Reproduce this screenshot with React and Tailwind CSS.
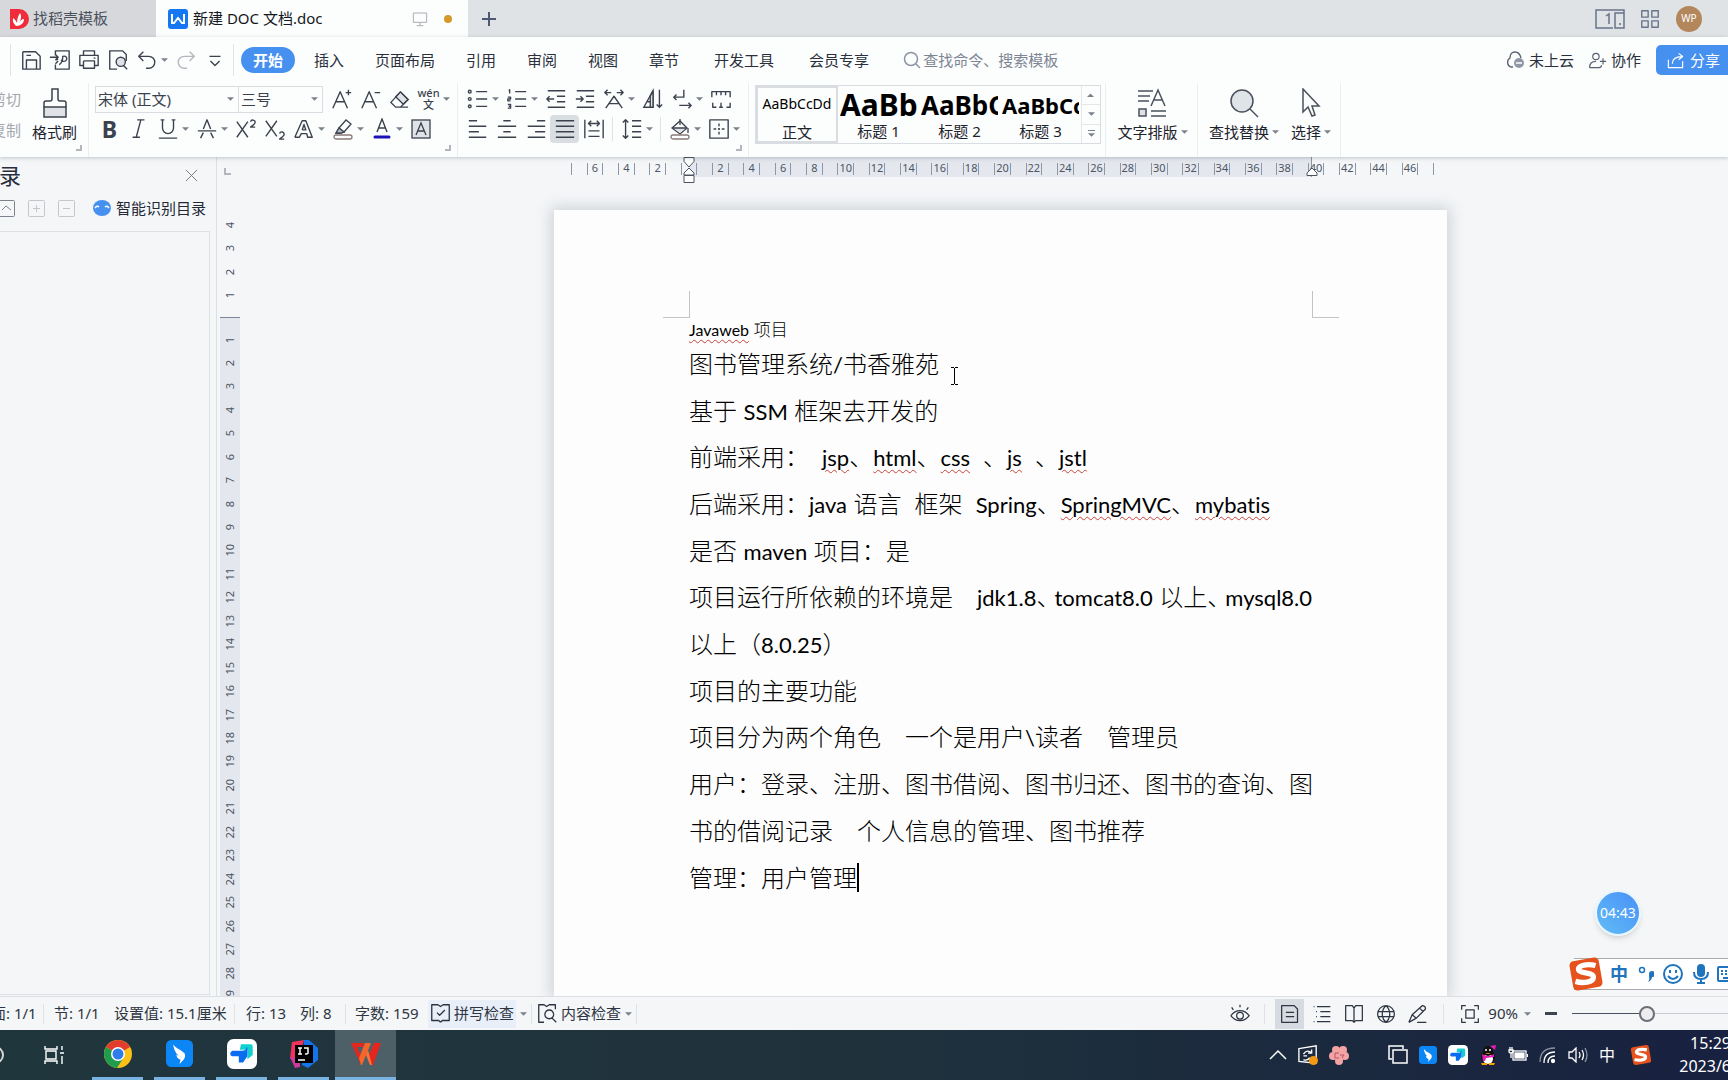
import { useState } from "react";
import clsx from "clsx";

// stroke drawings on a 24px grid
const PATHS = {
    save: "M3 3h14l5 5v14h-4M3 3v19h4M7 22v-10h11v10zM7 7h5",
    exportPdf: "M7 7V2h15v20H7v-5M1 9h9M7 6l3 3-3 3M7 12l3-1M11 17c3-1 4-4 4-9 4-1 5 2 4 4-1 2-4 2-6 0M7 16l3-3",
    print: "M6 7V2h12v5M6 18H2V7h20v11h-4M6 13h12v8H6v-8M17 10h2",
    preview: "M11 22H3V2h14l4 4v7",
    undo: "M8 3L3 8l5 5M3 8h11a6 6 0 0 1 0 13h-3",
    redo: "M16 3l5 5-5 5M21 8H10a6 6 0 0 0 0 13h3",
    more: "M6 8h12M7 13l5 5 5-5",
    italic: "M10 2h8M5 21h8M14 2l-5 19",
    underline: "M6 2v9a6 6 0 0 0 12 0V2M2 22h20M4 2h4M16 2h4",
    strike: "M2 14h20M8 12l4-10 4 10M5 22l3-6M19 22l-3-6",
    sup: "M2 4l12 17M14 4L2 21M17 4c1-3 5-2 5 1 0 1-1 2-5 5h5",
    sub: "M2 3l12 17M14 3L2 20M17 17c1-3 5-2 5 1 0 1-1 2-5 5h5",
    outlineA: "M2 21L10 3h4l7 18h-5l-1-4H9l-2 4H2M10 13l2-6 2 6h-4",
    growA: "M2 22L10 4l8 18M5 15h10M19 2v6M16 5h6",
    shrinkA: "M2 22L10 4l8 18M5 15h10M16 5h6",
    bullets: "M10 4h12M10 12h12M10 20h12",
    numbers: "M10 4h12M10 12h12M10 20h12M3 3l1-1v4M2 10h3v2H2v2h3M2 18h3v4H2M3 20h2",
    outdent: "M3 3h19M13 9h9M13 15h9M3 21h19M2 12h8M5 9l-3 3 3 3",
    indent: "M3 3h19M13 9h9M13 15h9M3 21h19M2 12h8M7 9l3 3-3 3",
    charScale: "M2 5h7M5 2L2 5l3 3M15 5h7M19 2l3 3-3 3M3 22l9-13 9 13M7 17h10",
    wrap: "M14 2v8H3M6 7l-3 3 3 3M9 19h13M19 16l3 3-3 3",
    tabs: "M2 10V4h20v6M7 4v4M12 4v4M17 4v4M3 16v5h4M10 21h4M12 16v5M18 21h4v-5",
    left: "M2 3h9M2 9h19M2 15h11M2 21h19",
    center: "M8 3h8M2 9h20M8 15h8M2 21h20",
    right: "M13 3h9M3 9h19M11 15h11M3 21h19",
    justify: "M2 3h20M2 9h20M2 15h20M2 21h20",
    distribute: "M2 2v20M22 2v20M6 6h12M9 3L6 6l3 3M15 3l3 3-3 3M6 14h12M6 20h12",
    lineSpace: "M5 2v20M2 5l3-3 3 3M2 19l3 3 3-3M12 3h10M12 9h10M12 15h10M12 21h10",
    borders: "M2 2h20v20H2zM12 6v3M12 15v3M6 12h3M15 12h3M11 12h2M12 11v2",
    eye: "M1 14c6-8 16-8 22 0c-6 8-16 8-22 0M16 14a4 4 0 1 1-8 0a4 4 0 1 1 8 0M12 1v3M2 4l2 3M22 4l-2 3",
    pageView: "M2 2h15l4 4v16H2zM7 10h10M7 15h10",
    outline: "M6 3h16M10 9h12M10 15h12M6 21h16M2 3h1M5 9h1M5 15h1M2 21h1",
    book: "M12 5V21M12 5l-2-3H2v18h8l2 2 2-2h8V2h-8l-2 3",
    globe: "M22 12a10 10 0 1 1-20 0a10 10 0 1 1 20 0M2 9h20M2 15h20M12 2c-6 5-6 15 0 20M12 2c6 5 6 15 0 20",
    pen: "M1 22l4-9L17 2q4 0 4 4L10 17l-9 5M14 5l4 4M11 22h11M5 13l5 4",
    fit: "M2 7V2h5M17 2h5v5M22 17v5h-5M7 22H2v-5M7 7h10v10H7z",
    check: "M12 22l-2-2H2V2h7l3 2 3-2h7v18h-8l-2 2M8 11l3 3 6-6",
    contentCheck: "M8 22H2V2h6l3 2 3-2h7v5M19 13a5 5 0 1 1-10 0a5 5 0 1 1 10 0M17 17l5 5",
    person: "M14 7a4 4 0 1 1-8 0a4 4 0 1 1 8 0M2 21c0-6 3-8 8-8M2 21h12c2 0 3-1 3-3M19 9v8M15 13h8",
    share: "M3 11v10h18v-8M8 16c0-6 3-9 12-9M16 3l5 4-5 4",
    grid: "M3 3h7v7H3zM14 3h7v7h-7zM3 14h7v7H3zM14 14h7v7h-7z",
    monitor: "M2 3h20v14H2zM12 17v5M7 22h10",
};

function Icon({ name, className, width = 1.5 }) {
    return (
        <svg viewBox="0 0 24 24" className={className} fill="none" stroke="currentColor" strokeWidth={width} strokeLinejoin="round">
            <path d={PATHS[name]} />
        </svg>
    );
}

function Caret() {
    return (
        <svg viewBox="0 0 8 4" className="h-1 w-[7px] shrink-0 text-[#7b818c]">
            <path d="M0 0h8L4 4z" fill="currentColor" />
        </svg>
    );
}

function Tool({ name, label, caret, active, children }) {
    return (
        <button aria-label={label} className="flex h-7 shrink-0 items-center">
            <span className={clsx("flex h-7 w-[29px] items-center justify-center rounded-sm", active && "bg-[#d9dee3]")}>
                {children || <Icon name={name} className="size-[22px]" />}
            </span>
            {caret && <span className="flex w-[10px] items-center"><Caret /></span>}
        </button>
    );
}

function Divider({ className = "h-5" }) {
    return <span className={clsx("w-px shrink-0 bg-[#dfe2e6]", className)} />;
}

function GroupCorner() {
    return <span className="absolute right-[6px] bottom-[6px] size-[6px] border-r-2 border-b-2 border-[#b3b7bd]" />;
}

function BirdIcon({ className }) {
    return (
        <svg viewBox="0 0 26 26" className={className}>
            <rect width="26" height="26" rx="5" fill="#0d86f5" />
            <path d="M7 4c2 4 9 6 11 9 1 3 0 5-2 7l-3 3 1-4c-3-1-4-3-4-5 1 1 2 1 2 1C9 12 7 8 7 4z" fill="#fff" />
        </svg>
    );
}

function TimIcon({ className }) {
    return (
        <svg viewBox="0 0 28 28" className={className}>
            <rect width="28" height="28" rx="6" fill="#fff" />
            <path d="M13 5h9q2 0 2 2v8l-5 4V10h-7z" fill="#12cfd0" />
            <path d="M5 11h9q4 0 4-3h1v8l-4 6h-4v-6H5q-2 0-2-2t2-3z" fill="#0a6cf0" />
        </svg>
    );
}

function SogouIcon({ className }) {
    return (
        <svg viewBox="0 0 34 34" className={className}>
            <rect x="3" y="3" width="28" height="28" rx="4" fill="#e5521d" transform="rotate(-10 17 17)" />
            <path d="M26 9C18 7 9 9 10 13s14 2 14 7-10 6-17 4" fill="none" stroke="#fff" strokeWidth="5" />
        </svg>
    );
}

function TabBar() {
    return (
        <header className="flex h-[37px] shrink-0 items-center bg-[#dfe3e5]">
            <button className="flex h-full w-[156px] items-center gap-1 bg-[#d6d8dc] pl-[9px] text-[#4c525c]">
                <svg viewBox="0 0 20 20" className="size-5">
                    <path d="M1 0h9a10 10 0 0 1 0 20H1z" fill="#f02c3a" />
                    <path d="M7 17C3 13 4 11 4 9c2 1 3 3 4 5 0-4 1-7 3-10 2 3 1 7-1 10 1-2 3-4 5-4 0 4-3 7-8 7z" fill="#fff" />
                </svg>
                找稻壳模板
            </button>
            <div className="flex h-full w-[312px] items-center bg-[#fcfdfd] pr-4 pl-3">
                <svg viewBox="0 0 20 20" className="size-5">
                    <rect width="20" height="20" rx="3" fill="#1677f2" />
                    <path d="M4 5v9h2l4-5 4 5h2V5" fill="none" stroke="#fff" strokeWidth="2" />
                </svg>
                <h1 className="ml-[5px] flex-1 text-[#15181d]">新建 DOC 文档.doc</h1>
                <Icon name="monitor" className="size-4 text-[#a8adb5]" />
                <span className="ml-4 size-2 rounded-full bg-[#d39a27]" />
            </div>
            <button aria-label="新建标签" className="ml-[13px] text-[#4f5871]">
                <svg viewBox="0 0 16 16" className="size-4"><path d="M8 1v14M1 8h14" stroke="currentColor" strokeWidth="2" /></svg>
            </button>
            <div className="ml-auto flex items-center pr-[13px] text-[#69738a]">
                <svg viewBox="0 0 30 20" className="h-5 w-[30px]" fill="none" stroke="currentColor" strokeWidth="1.5">
                    <path d="M18 19H1V1h28v18h-9V4h9M24 15h2M11 7l3-2v10" />
                </svg>
                <Icon name="grid" className="ml-[14px] size-[22px]" />
                <span className="ml-[15px] flex size-[26px] items-center justify-center rounded-full bg-[#b3875b] text-[10px] text-white">WP</span>
                <Divider className="ml-3 h-[26px]" />
            </div>
        </header>
    );
}

const MENUS = ["插入", "页面布局", "引用", "审阅", "视图", "章节"];
const EXTRA_MENUS = ["开发工具", "会员专享"];

function MenuRow() {
    return (
        <nav className="flex h-[46px] shrink-0 items-center pl-[10px]">
            <Divider className="h-8" />
            <div className="flex items-center pl-[5px] text-[#3b424d]">
                <Tool name="save" label="保存" />
                <Tool name="exportPdf" label="输出为PDF" />
                <Tool name="print" label="打印" />
                <Tool label="打印预览">
                    <svg viewBox="0 0 24 24" className="size-[22px]" fill="none" stroke="currentColor" strokeWidth="1.500">
                        <path d={PATHS.preview} /><circle cx="15" cy="14" r="5" fill="#dfe2e6" /><path d="M18 18l4 4" />
                    </svg>
                </Tool>
                <Tool name="undo" label="撤销" caret />
                <span className="text-[#b4b8be]"><Tool name="redo" label="恢复" /></span>
                <Tool name="more" label="更多" />
            </div>
            <Divider className="ml-1 h-8" />
            <button className="ml-[7px] h-[26px] w-[54px] rounded-full bg-[#4690ef] font-bold text-white">开始</button>
            <div className="ml-[19px] flex gap-[31px]">
                {MENUS.map((m) => <button key={m}>{m}</button>)}
            </div>
            <div className="ml-[35px] flex gap-[35px]">
                {EXTRA_MENUS.map((m) => <button key={m}>{m}</button>)}
            </div>
            <label className="ml-[34px] flex items-center gap-[2px] text-[#8e95a3]">
                <svg viewBox="0 0 18 18" className="size-[18px]" fill="none" stroke="currentColor" strokeWidth="1.5">
                    <circle cx="8" cy="8" r="6.500" /><path d="M13 13l4 4" />
                </svg>
                <input aria-label="查找命令" placeholder="查找命令、搜索模板" className="w-[150px] bg-transparent outline-none placeholder:text-[#7d8594]" />
            </label>
            <div className="ml-auto flex items-center">
                <button className="flex items-center gap-1">
                    <svg viewBox="0 0 20 20" className="size-5" fill="none">
                        <path d="M8 17H6a5 5 0 0 1-1-9C5 4 7 2 10 2s5 2 6 6" stroke="#596070" strokeWidth="1.300" />
                        <circle cx="14" cy="13" r="5" fill="#8f97a8" /><path d="M11 13h6" stroke="#fff" strokeWidth="1.500" />
                    </svg>
                    未上云
                </button>
                <button className="ml-[14px] flex items-center gap-1">
                    <Icon name="person" className="size-[19px] text-[#596070]" />
                    协作
                </button>
                <button className="ml-[15px] flex h-[30px] items-center gap-[5px] rounded-l-[5px] bg-[#4690ef] pr-2 pl-[10px] text-white">
                    <Icon name="share" className="size-[19px]" />
                    分享
                </button>
            </div>
        </nav>
    );
}

const STYLES = [
    { name: "标题 1", sample: "AaBb", size: "text-[30px]" },
    { name: "标题 2", sample: "AaBbC", size: "text-[26px]" },
    { name: "标题 3", sample: "AaBbCc", size: "text-[22px]" },
];

function BigTool({ label, children }) {
    return (
        <button className="flex flex-col items-center">
            <span className="flex h-[34px] items-center text-[#4a515c]">{children}</span>
            <span className="flex items-center gap-[3px] leading-6 text-[#1d232c]">{label}<Caret /></span>
        </button>
    );
}

function Ribbon() {
    const [font, setFont] = useState("宋体 (正文)");
    const [size, setSize] = useState("三号");

    return (
        <div className="flex h-[74px] shrink-0 text-[#3b424d]">
            <div className="relative flex w-[89px] border-r border-[#eceef0]">
                <div className="-ml-[9px] flex w-[30px] shrink-0 flex-col gap-[7px] pt-1 text-[#a3a7ae]">
                    <button className="leading-6 whitespace-nowrap">剪切</button>
                    <button className="leading-6 whitespace-nowrap">复制</button>
                </div>
                <div className="ml-[11px] flex flex-col items-center pt-[3px]">
                    <svg viewBox="0 0 26 34" className="h-[34px] w-[26px]" fill="none" stroke="currentColor" strokeWidth="1.500">
                        <path d="M2 21h22v10H2z" fill="#dfe2e6" /><path d="M2 21v-4q0-2 2-2h4q2 0 2-2V3h6v10q0 2 2 2h4q2 0 2 2v4" />
                    </svg>
                    <button className="leading-6 whitespace-nowrap text-[#1d232c]">格式刷</button>
                </div>
                <GroupCorner />
            </div>

            <div className="relative flex w-[369px] shrink-0 flex-col border-r border-[#eceef0] pl-[6px]">
                <div className="flex h-8 items-center">
                    <label className="relative flex h-[27px] w-[144px] items-center border border-[#d9dce0]">
                        <select aria-label="字体" value={font} onChange={(e) => setFont(e.target.value)} className="w-full appearance-none bg-transparent pl-[2px] outline-none">
                            <option>宋体 (正文)</option>
                        </select>
                        <span className="absolute right-1 flex"><Caret /></span>
                    </label>
                    <label className="relative -ml-px flex h-[27px] w-[85px] items-center border border-[#d9dce0]">
                        <select aria-label="字号" value={size} onChange={(e) => setSize(e.target.value)} className="w-full appearance-none bg-transparent pl-[2px] outline-none">
                            <option>三号</option>
                        </select>
                        <span className="absolute right-1 flex"><Caret /></span>
                    </label>
                    <span className="w-1" />
                    <Tool name="growA" label="增大字号" />
                    <Tool name="shrinkA" label="减小字号" />
                    <Tool label="清除格式">
                        <svg viewBox="0 0 22 22" className="size-[21px]" fill="none" stroke="currentColor" strokeWidth="1.400">
                            <path d="M7 8l5-5 8 8-5 5z" fill="#dfe2e6" /><path d="M12 3l8 8-8 8H7l-5-5L12 3M9 19h11" />
                        </svg>
                    </Tool>
                    <Tool label="拼音指南" caret>
                        <span className="flex flex-col items-center text-[11px] leading-[12px] font-medium"><span>wén</span><span>文</span></span>
                    </Tool>
                </div>
                <div className="flex h-7 items-center">
                    <Tool label="加粗"><span className="text-[23px] font-bold">B</span></Tool>
                    <Tool name="italic" label="倾斜" />
                    <Tool name="underline" label="下划线" caret />
                    <Tool name="strike" label="删除线" caret />
                    <Tool name="sup" label="上标" />
                    <Tool name="sub" label="下标" />
                    <Tool name="outlineA" label="文字效果" caret />
                    <Tool label="突出显示" caret>
                        <svg viewBox="0 0 22 22" className="size-[22px]" fill="none" stroke="currentColor" strokeWidth="1.300">
                            <path d="M7 10l7-8 5 4-7 8zM7 10l-3 5h5l3-1" /><path d="M7 10l5 4-3 1H4z" fill="#b9bfc6" /><rect x="2" y="17" width="18" height="4" rx="2" stroke="#8a7a78" />
                        </svg>
                    </Tool>
                    <Tool label="字体颜色" caret>
                        <svg viewBox="0 0 20 22" className="h-[22px] w-5" fill="none" stroke="currentColor" strokeWidth="1.400">
                            <path d="M5 14L10 1l5 13M7 10h6" /><path d="M3 19h14" stroke="#1a12b8" strokeWidth="3" strokeLinecap="round" />
                        </svg>
                    </Tool>
                    <Tool label="字符底纹">
                        <svg viewBox="0 0 20 20" className="size-5" fill="none" stroke="currentColor" strokeWidth="1.300">
                            <rect x="1" y="1" width="18" height="18" fill="#dfe2e6" /><path d="M5 16l5-12 5 12M7 12h6" />
                        </svg>
                    </Tool>
                </div>
                <GroupCorner />
            </div>

            <div className="relative flex w-[291px] shrink-0 flex-col border-r border-[#eceef0] pl-[5px]">
                <div className="flex h-8 items-center">
                    <Tool label="项目符号" caret>
                        <svg viewBox="0 0 24 24" className="size-[22px]" fill="none" stroke="currentColor" strokeWidth="1.500">
                            <path d={PATHS.bullets} /><circle cx="3" cy="4" r="1.500" /><circle cx="3" cy="12" r="1.500" /><circle cx="3" cy="20" r="1.500" />
                        </svg>
                    </Tool>
                    <Tool name="numbers" label="编号" caret />
                    <Tool name="outdent" label="减少缩进" />
                    <Tool name="indent" label="增加缩进" />
                    <Tool name="charScale" label="中文版式" caret />
                    <Tool label="排序">
                        <svg viewBox="0 0 24 24" className="size-[22px]" fill="none" stroke="currentColor" strokeWidth="1.500">
                            <path d="M2 21L12 3v18zM6 15h6" /><path d="M12 3v18H9V9z" fill="#dfe2e6" /><path d="M19 2v19M16 18l3 3 3-3" />
                        </svg>
                    </Tool>
                    <Tool name="wrap" label="显示编辑标记" caret />
                    <Tool name="tabs" label="制表位" />
                </div>
                <div className="flex h-7 items-center">
                    <Tool name="left" label="左对齐" />
                    <Tool name="center" label="居中" />
                    <Tool name="right" label="右对齐" />
                    <Tool name="justify" label="两端对齐" active />
                    <Tool name="distribute" label="分散对齐" />
                    <Divider className="mx-1 h-6" />
                    <Tool name="lineSpace" label="行距" caret />
                    <Divider className="mx-1 h-6" />
                    <Tool label="底纹颜色" caret>
                        <svg viewBox="0 0 22 22" className="size-[22px]" fill="none" stroke="currentColor" strokeWidth="1.300">
                            <path d="M3 10l8-7 7 7-7 6z" /><path d="M5 10h12l-6 5z" fill="#dfe2e6" stroke="none" /><path d="M3 10h15M11 1v6M19 10v5" /><rect x="2" y="17" width="18" height="4" rx="2" stroke="#8a7a78" />
                        </svg>
                    </Tool>
                    <Tool name="borders" label="边框" caret />
                </div>
                <GroupCorner />
            </div>

            <div className="flex w-[357px] shrink-0 border-r border-[#eceef0] pl-[6px]">
                <div className="mt-[2px] flex h-[59px] w-[346px] border border-[#d9dce0] text-[#1d232c]">
                    <button className="flex w-[82px] flex-col items-center border-2 border-[#d9dce0]">
                        <span className="h-8 text-sm leading-8 text-black">AaBbCcDd</span>
                        <span className="leading-6">正文</span>
                    </button>
                    {STYLES.map((s) => (
                        <button key={s.name} className="flex w-[81px] flex-col items-center pt-[2px]">
                            <span className={clsx("h-8 w-[77px] overflow-hidden text-left leading-[34px] font-bold text-black", s.size)}>{s.sample}</span>
                            <span className="leading-6">{s.name}</span>
                        </button>
                    ))}
                    <div className="flex flex-1 flex-col border-l border-[#e4e6e9]">
                        <button aria-label="上一行" className="flex flex-1 rotate-180 items-center justify-center"><Caret /></button>
                        <button aria-label="下一行" className="flex flex-1 items-center justify-center border-y border-[#e4e6e9]"><Caret /></button>
                        <button aria-label="更多样式" className="flex flex-1 flex-col items-center justify-center gap-[2px]"><span className="h-px w-[7px] bg-[#7b818c]" /><Caret /></button>
                    </div>
                </div>
            </div>

            <div className="flex w-[92px] shrink-0 justify-center border-r border-[#eceef0] pt-[3px] pl-[2px]">
                <BigTool label="文字排版">
                    <svg viewBox="0 0 30 30" className="size-[30px]" fill="none" stroke="currentColor" strokeWidth="1.500">
                        <path d="M1 3h15M1 8h12M1 13h11M14 18l7-16 7 16M17 12h8M14 23h15M14 28h15" /><rect x="2" y="21" width="7" height="7" fill="#dfe2e6" />
                    </svg>
                </BigTool>
            </div>
            <div className="flex w-[143px] shrink-0 justify-center gap-3 border-r border-[#eceef0] pt-[3px] pl-[2px]">
                <BigTool label="查找替换">
                    <svg viewBox="0 0 30 30" className="size-[30px]" fill="none" stroke="currentColor" strokeWidth="1.500">
                        <circle cx="13" cy="13" r="11" fill="#dfe4e8" /><path d="M21 21l8 8" />
                    </svg>
                </BigTool>
                <BigTool label="选择">
                    <svg viewBox="0 0 22 30" className="h-[30px] w-[22px]" fill="none" stroke="currentColor" strokeWidth="1.500">
                        <path d="M3 1v23l5-5 4 9 3-1-3-9h7L3 1z" />
                    </svg>
                </BigTool>
            </div>
        </div>
    );
}

function OutlinePanel() {
    return (
        <aside className="flex w-[217px] shrink-0 flex-col overflow-hidden border-r border-[#dcdfe3]">
            <div className="flex h-9 items-center justify-between pr-[18px]">
                <h2 className="-ml-[23px] text-[22px] text-[#272e3b]">目录</h2>
                <button aria-label="关闭" className="text-[#6e7480]">
                    <svg viewBox="0 0 14 14" className="size-[13px]" stroke="currentColor"><path d="M1 1l12 12M13 1L1 13" /></svg>
                </button>
            </div>
            <div className="-ml-[2px] flex h-[30px] items-center text-[#c3c6cb]">
                <button aria-label="收起" className="text-[#7d838c]">
                    <svg viewBox="0 0 17 17" className="size-[17px]" fill="none" stroke="currentColor"><rect x=".5" y=".5" width="16" height="16" rx="1" /><path d="M4 10l4-4 5 4" /></svg>
                </button>
                <button aria-label="展开" className="ml-[13px]">
                    <svg viewBox="0 0 17 17" className="size-[17px]" fill="none" stroke="currentColor"><rect x=".5" y=".5" width="16" height="16" rx="1" /><path d="M5 8.500h7M8.500 5v7" /></svg>
                </button>
                <button aria-label="折叠" className="ml-[13px]">
                    <svg viewBox="0 0 17 17" className="size-[17px]" fill="none" stroke="currentColor"><rect x=".5" y=".5" width="16" height="16" rx="1" /><path d="M5 8.500h7" /></svg>
                </button>
                <button className="ml-[18px] flex items-center gap-[5px] whitespace-nowrap text-[#232a35]">
                    <svg viewBox="0 0 18 16" className="h-4 w-[18px]">
                        <ellipse cx="9" cy="8" rx="9" ry="8" fill="#4690ef" /><path d="M2 8q2-3 4-1M12 7q2-2 4 1" fill="none" stroke="#fff" strokeWidth="1.500" />
                    </svg>
                    智能识别目录
                </button>
            </div>
            <div className="mt-2 mr-[6px] mb-px flex-1 border-t border-r border-b border-[#dde0e4]" />
        </aside>
    );
}

const V_ABOVE = [4, 3, 2, 1];
const V_BELOW = Array.from({ length: 29 }, (_, i) => i + 1);

function VerticalLabel({ n }) {
    return (
        <span className="flex items-center justify-center">
            <span className="rotate-180 leading-4 [writing-mode:vertical-rl]">{n}</span>
        </span>
    );
}

function VerticalRuler() {
    return (
        <div className="ml-[3px] flex w-5 shrink-0 flex-col overflow-hidden text-[11px] text-[#4d5564]">
            <span className="mt-[11px] ml-1 size-[7px] shrink-0 border-b-2 border-l-2 border-[#b3b7bd]" />
            <div className="mt-[38px] grid h-[94px] shrink-0 grid-rows-4">
                {V_ABOVE.map((n) => <VerticalLabel key={n} n={n} />)}
            </div>
            <div className="mt-[10px] shrink-0 border-t border-[#7b8799] bg-[#e4e8ee] pt-[10px]">
                <div className="grid h-[680px] grid-rows-[repeat(29,minmax(0,1fr))]">
                    {V_BELOW.map((n) => <VerticalLabel key={n} n={n} />)}
                </div>
            </div>
        </div>
    );
}

// one cell per character, every second one carries its number
const H_CELLS = Array.from({ length: 55 }, (_, i) => (i % 2 ? Math.abs(i - 7) : null));

function HorizontalRuler() {
    return (
        <div className="relative w-[893px] shrink-0">
            <div className="mr-[135px] ml-[135px] h-5 border-r border-[#8d97a8] bg-[#e4e8ee]" />
            <div className="absolute top-[6px] right-[13px] left-[17px] grid h-3 grid-cols-[repeat(55,minmax(0,1fr))] border-r border-[#8d97a8] text-[11px] leading-[9px] text-[#4d5564]">
                {H_CELLS.map((n, i) => (
                    <span key={i} className="flex justify-center border-l border-[#8d97a8]">{n ? n : ""}</span>
                ))}
            </div>
            <svg viewBox="0 0 12 26" className="absolute top-0 left-[129px] h-[26px] w-3" fill="#fff" stroke="#4d5564">
                <path d="M1 .5h10v4L6 10 1 4.500zM6 11l5 5v2H1v-2zM1 18.500h10v7H1z" />
            </svg>
            <svg viewBox="0 0 12 9" className="absolute top-[10px] right-[129px] h-[9px] w-3" fill="#fff" stroke="#4d5564">
                <path d="M6 1l5 5v2.500H1V6z" />
            </svg>
        </div>
    );
}

const TYPOS = ["Javaweb", "jsp", "html", "css", "js", "jstl", "SpringMVC", "mybatis"];

const LINES = [
    "图书管理系统/书香雅苑",
    "基于 SSM 框架去开发的",
    "前端采用：  jsp、html、css  、js  、jstl",
    "后端采用：java 语言  框架  Spring、SpringMVC、mybatis",
    "是否 maven 项目：是",
    "项目运行所依赖的环境是　jdk1.8、tomcat8.0 以上、mysql8.0",
    "以上（8.0.25）",
    "项目的主要功能",
    "项目分为两个角色　一个是用户\\读者　管理员",
    "用户：登录、注册、图书借阅、图书归还、图书的查询、图",
    "书的借阅记录　个人信息的管理、图书推荐",
    "管理：用户管理",
];

// western words are set in a smaller face than the Chinese around them
function Line({ text, small }) {
    const tight = text.includes("tomcat");
    return text.split(/([\x21-\x7e]+)/).map((part, i) => {
        if (i % 2 === 0) {
            if (tight && part.endsWith("、")) {
                return <span key={i} className="-mr-[6px]">{part}</span>;
            }
            return part;
        }
        return (
            <span
                key={i}
                className={clsx(
                    "font-['Lato'] font-normal",
                    small ? "text-base" : "text-[22px]",
                    TYPOS.includes(part) && "underline decoration-[#c8433d] decoration-wavy decoration-1 underline-offset-3"
                )}
            >
                {part}
            </span>
        );
    });
}

function Page() {
    return (
        <article className="relative w-[893px] flex-1 shrink-0 bg-[#fdfdfd] pt-[81px] text-black shadow-[0_0_14px_3px_rgba(60,70,80,0.2)]">
            <div className="flex justify-between pr-[108px] pl-[109px]">
                <span className="size-[27px] border-r border-b border-[#c4c4c4]" />
                <span className="size-[27px] border-b border-l border-[#c4c4c4]" />
            </div>
            <div className="pl-[135px] font-['Lato','Noto_Sans_CJK_SC',sans-serif] font-light whitespace-pre [font-variant-ligatures:none]">
                <p className="h-[23px] text-[17px] leading-5"><Line text="Javaweb 项目" small /></p>
                <div className="grid h-[560px] grid-rows-12">
                    {LINES.map((text, i) => (
                        <p key={i} className="flex items-center text-2xl leading-[46px]">
                            <span><Line text={text} /></span>
                            {i === LINES.length - 1 && <span className="h-[29px] w-[2px] bg-black" />}
                        </p>
                    ))}
                </div>
            </div>
            <svg viewBox="0 0 9 18" className="absolute top-[157px] left-[396px] h-[18px] w-[9px]" stroke="#000" fill="none">
                <path d="M1 .5h3M5 .5h3M4.500 1v16M1 17.500h3M5 17.500h3" />
            </svg>
        </article>
    );
}

function ImeBar() {
    return (
        <div className="absolute right-0 bottom-[6px] flex h-8 w-[154px] items-center border-y border-[#a9abae] bg-white pl-9 text-[#1f74bd]">
            <span className="absolute -left-[6px]"><SogouIcon className="size-9" /></span>
            <span className="text-lg leading-5 font-bold">中</span>
            <svg viewBox="0 0 16 18" className="ml-[10px] h-[18px] w-4 shrink-0"><circle cx="4" cy="5" r="2.500" fill="none" stroke="currentColor" strokeWidth="1.500" /><path d="M11 9a3 3 0 1 1 3 3q0 3-4 5 2-3 1-5z" fill="currentColor" /></svg>
            <svg viewBox="0 0 20 20" className="ml-[9px] size-5 shrink-0" fill="none" stroke="currentColor" strokeWidth="2"><circle cx="10" cy="10" r="9" /><path d="M7 6v3M13 6v3M5 12q5 6 10 0" /></svg>
            <svg viewBox="0 0 16 20" className="ml-[10px] h-5 w-4 shrink-0" fill="none" stroke="currentColor" strokeWidth="2"><rect x="5" y="1" width="6" height="11" rx="3" fill="currentColor" /><path d="M1 8q0 7 7 7t7-7M8 15v4M4 19h8" /></svg>
            <svg viewBox="0 0 20 16" className="ml-2 h-4 w-5 shrink-0" fill="none" stroke="currentColor" strokeWidth="2"><rect x="1" y="1" width="18" height="14" rx="1" /><path d="M4 5h2M8 5h2M4 8h2M8 8h2M12 8h2M6 12h8" /></svg>
        </div>
    );
}

function ViewButton({ name, label, active }) {
    return (
        <button aria-label={label} className={clsx("flex h-[30px] w-[29px] items-center justify-center", active && "bg-[#d6dbe2]")}>
            <Icon name={name} className="size-5" />
        </button>
    );
}

function StatusBar() {
    const [zoom, setZoom] = useState(48);

    return (
        <footer className="flex h-[34px] shrink-0 items-center overflow-hidden border-t border-[#dcdfe3] bg-[#f4f6f8] whitespace-nowrap text-[#2e3542]">
            <span className="-ml-6 w-[67px]">页面: 1/1</span>
            <Divider />
            <span className="ml-[10px] w-[60px]">节: 1/1</span>
            <span className="w-[120px]">设置值: 15.1厘米</span>
            <Divider />
            <span className="ml-[11px] w-[54px]">行: 13</span>
            <span className="w-[45px]">列: 8</span>
            <Divider />
            <span className="ml-[9px] w-[73px]">字数: 159</span>
            <button className="flex h-7 items-center gap-[3px] bg-[#e8eff8] px-[2px]"><Icon name="check" className="size-[21px]" />拼写检查</button>
            <button aria-label="拼写检查选项" className="mx-1"><Caret /></button>
            <Divider />
            <button className="ml-[5px] flex items-center gap-[3px]"><Icon name="contentCheck" className="size-[21px]" />内容检查</button>
            <button aria-label="内容检查选项" className="mx-1"><Caret /></button>
            <Divider />
            <div className="ml-auto flex items-center gap-[3px]">
                <ViewButton name="eye" label="护眼模式" />
                <Divider className="mx-[7px] h-5" />
                <ViewButton name="pageView" label="页面视图" active />
                <ViewButton name="outline" label="大纲" />
                <ViewButton name="book" label="阅读版式" />
                <ViewButton name="globe" label="Web版式" />
                <ViewButton name="pen" label="写作模式" />
                <Divider className="mx-2 h-5" />
                <ViewButton name="fit" label="最佳显示比例" />
            </div>
            <button className="ml-1 flex items-center gap-[6px]">90% <Caret /></button>
            <button aria-label="缩小" className="ml-[14px] h-[3px] w-3 bg-[#3c4452]" />
            <input
                type="range"
                aria-label="缩放"
                value={zoom}
                onChange={(e) => setZoom(Number(e.target.value))}
                className="ml-[15px] h-4 w-[156px] appearance-none bg-[linear-gradient(to_right,#4a5160_48%,#c9cdd3_48%)] bg-[length:100%_1px] bg-center bg-no-repeat [&::-webkit-slider-thumb]:size-4 [&::-webkit-slider-thumb]:appearance-none [&::-webkit-slider-thumb]:rounded-full [&::-webkit-slider-thumb]:border-2 [&::-webkit-slider-thumb]:border-[#6a6f78] [&::-webkit-slider-thumb]:bg-[#ededef]"
            />
        </footer>
    );
}

function TaskButton({ label, active, children }) {
    return (
        <button
            aria-label={label}
            className={clsx("flex h-full items-center justify-center border-b-[3px] border-[#78b3e2]", active ? "-ml-[5px] w-[61px] bg-[#4d6068]" : "w-[51px]")}
        >
            {children}
        </button>
    );
}

function Taskbar() {
    return (
        <div className="flex h-[50px] shrink-0 items-center overflow-hidden bg-linear-to-r from-[#20363d] via-[#1f323c] to-[#182140] text-white">
            <button aria-label="搜索" className="-ml-[14px] size-[18px] shrink-0 rounded-full border-2 border-white/80" />
            <button aria-label="任务视图" className="ml-10">
                <svg viewBox="0 0 20 20" className="size-5" fill="none" stroke="currentColor" strokeWidth="1.400">
                    <path d="M1 1v3h12V1M1 19v-3h12v3M2 6h10v8H2zM18 1v4M18 11v8M16 8h4" />
                </svg>
            </button>
            <div className="ml-[28px] flex h-full gap-[11px]">
                <TaskButton label="Chrome">
                    <svg viewBox="0 0 30 30" className="size-[30px]">
                        <circle cx="15" cy="15" r="14" fill="#fbc116" />
                        <path d="M15 15L2.900 8a14 14 0 0 1 24.200 0z" fill="#e33b2e" />
                        <path d="M15 15L2.900 8A14 14 0 0 0 14 29l7-11z" fill="#1f9d4d" />
                        <circle cx="15" cy="15" r="7" fill="#fff" /><circle cx="15" cy="15" r="5.500" fill="#2f7de9" />
                    </svg>
                </TaskButton>
                <TaskButton label="钉钉"><BirdIcon className="size-[27px]" /></TaskButton>
                <TaskButton label="TIM"><TimIcon className="size-[30px]" /></TaskButton>
                <TaskButton label="IntelliJ IDEA">
                    <svg viewBox="0 0 30 30" className="size-[30px]">
                        <path d="M3 3l12-2-5 17-9 2z" fill="#f0325c" /><path d="M1 18l10 1v9l-5 1z" fill="#c93a9c" />
                        <path d="M15 1l5 0 9 8v12l-10 8-6-3z" fill="#1674ea" />
                        <path d="M6 6h18v18H6z" fill="#000" />
                        <path d="M9 9h4M11 9v6M9 15h4M15 9h4v5q0 1-3 1M9 21h7" stroke="#fff" strokeWidth="1.500" fill="none" />
                    </svg>
                </TaskButton>
                <TaskButton label="WPS" active>
                    <svg viewBox="0 0 30 26" className="h-[26px] w-[30px]">
                        <path d="M0 2h13l-1 4H6l5 11-1 7z" fill="#e5261f" />
                        <path d="M14 2h6l-9 22h-1L8 17z" fill="#f4662a" /><path d="M23 2h7l-8 22h-3l-2-8z" fill="#e5261f" /><path d="M17 9l4 15h-2l-4-10z" fill="#f9743a" />
                    </svg>
                </TaskButton>
            </div>

            <div className="ml-auto flex items-center gap-[11px]">
                <svg viewBox="0 0 18 18" className="size-[18px]" fill="none" stroke="currentColor" strokeWidth="1.500"><path d="M1 13l8-8 8 8" /></svg>
                <svg viewBox="0 0 22 22" className="size-5" fill="none" stroke="currentColor" strokeWidth="1.500">
                    <path d="M1 4l19-3v19L1 18zM6 10q4-6 9-1M15 5v4h-4M6 16q4 2 7-2M6 12h4" /><circle cx="17" cy="17" r="5" fill="#f29a16" stroke="none" />
                </svg>
                <svg viewBox="0 0 20 20" className="size-5">
                    <g fill="#f3a3a3"><circle cx="7" cy="5" r="4" /><circle cx="14" cy="5" r="4" /><circle cx="16" cy="11" r="4" /><circle cx="10" cy="16" r="4" /><circle cx="4" cy="11" r="4" /><circle cx="10" cy="10" r="6" /></g>
                    <path d="M6 8h4M6 8v5h4M11 10h4l-2 3" stroke="#b65568" fill="none" />
                </svg>
                <svg viewBox="0 0 20 20" className="ml-7 size-5" fill="none" stroke="currentColor" strokeWidth="1.500"><path d="M4 14H1V1h14v3" /><rect x="5" y="5" width="14" height="13" /></svg>
                <BirdIcon className="size-[18px]" />
                <TimIcon className="size-5" />
                <svg viewBox="0 0 18 20" className="h-5 w-[18px]">
                    <ellipse cx="9" cy="12" rx="7" ry="7" fill="#111" /><ellipse cx="9" cy="14" rx="5" ry="5" fill="#fff" /><circle cx="9" cy="6" r="5" fill="#111" />
                    <path d="M3 9q6 4 12 0v3l-8 1-1 3H4z" fill="#e41bb5" /><path d="M11 1l6-1-1 5z" fill="#e41bb5" />
                    <circle cx="7" cy="5" r="1" fill="#fff" /><circle cx="11" cy="5" r="1" fill="#fff" /><path d="M6 8h6l-3 1zM2 18h6v2H3zM10 18h6l-1 2h-5z" fill="#f5a400" />
                </svg>
                <svg viewBox="0 0 20 16" className="h-4 w-5" fill="none" stroke="currentColor" strokeWidth="1.300"><path d="M1 3h4v2q-2 2-4 0zM2 3V0M4 3V0M3 6v5" /><rect x="5" y="4" width="13" height="9" /><rect x="7" y="6" width="9" height="5" fill="currentColor" /><path d="M19.500 7v3" /></svg>
                <svg viewBox="0 0 18 18" className="size-[18px]" fill="none" stroke="currentColor" strokeWidth="1.300"><path d="M1 16Q1 2 16 2" opacity=".5" /><path d="M5 17Q5 6 16 6M9 17q0-7 7-7" /><circle cx="14" cy="15" r="1.500" fill="currentColor" /></svg>
                <svg viewBox="0 0 20 16" className="h-4 w-5" fill="none" stroke="currentColor" strokeWidth="1.300"><path d="M1 5h3l4-4v14l-4-4H1zM11 5q2 3 0 6M14 3q3 5 0 10" /><path d="M17 1q4 7 0 14" opacity=".5" /></svg>
                <span className="text-base">中</span>
                <SogouIcon className="ml-1 size-[22px]" />
            </div>
            <time className="-mr-3 ml-6 w-[64px] text-right text-base leading-[23px]">
                <span className="block pr-[9px]">15:29</span>
                <span className="block pr-[9px]">2023/6</span>
            </time>
        </div>
    );
}

export default function App() {
    return (
        <div className="flex h-screen flex-col overflow-hidden bg-[#f4f6f8] font-['Noto_Sans','Noto_Sans_CJK_SC',sans-serif] text-[15px] text-[#2a303b]">
            <TabBar />
            <div className="relative z-10 shrink-0 overflow-hidden bg-[#fcfdfd] shadow-[0_1px_4px_rgba(40,50,60,0.25)]">
                <MenuRow />
                <Ribbon />
            </div>
            <main className="relative flex min-h-0 flex-1">
                <OutlinePanel />
                <VerticalRuler />
                <section className="flex min-w-0 flex-1 flex-col items-center gap-[33px] overflow-hidden pl-[33px]">
                    <HorizontalRuler />
                    <Page />
                </section>
                <span className="absolute right-[87px] bottom-[60px] flex size-[46px] items-center justify-center rounded-full border-2 border-[#e9f6ff] bg-linear-to-tr from-[#62bdf5] to-[#4a8ff8] text-sm text-white shadow-md">04:43</span>
                <ImeBar />
            </main>
            <StatusBar />
            <Taskbar />
        </div>
    );
}
